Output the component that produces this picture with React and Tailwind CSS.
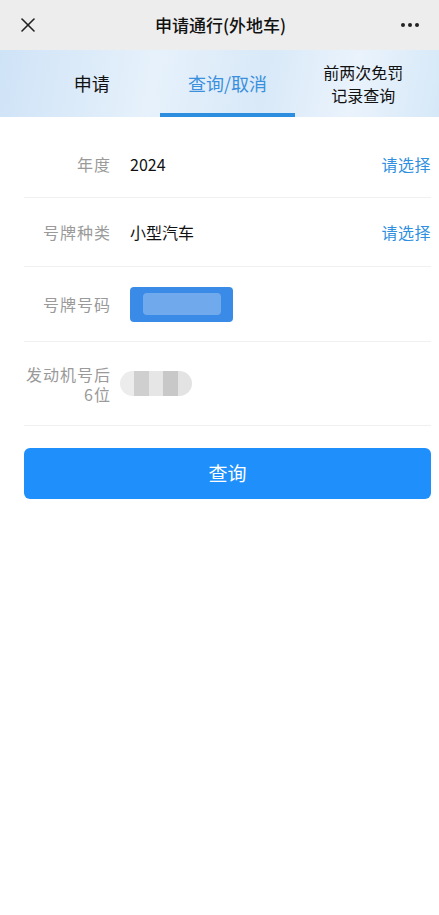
import { X } from 'lucide-react';

const cjk = { fontFamily: '"Noto Sans CJK SC", "Noto Sans", sans-serif' };

function Row({ label, children, right, className }) {
    return (
        <div className={`flex items-center border-b border-[#f0f0f0] ${className}`}>
            <div className="w-[87px] shrink-0 text-right text-[16px] leading-[20px] tracking-[1px] text-[#9a9a9a]">
                {label}
            </div>
            <div className="flex-1 pl-[19px] text-[16px] text-[#111]">{children}</div>
            {right && <div className="text-[16px] tracking-[0.5px] text-[#2f8fe0]">{right}</div>}
        </div>
    );
}

export default function App() {
    return (
        <div className="min-h-[915px] bg-white" style={cjk}>
            {/* top bar */}
            <div className="h-[50px] bg-[#ededed] flex items-center justify-between px-[16px]">
                <X size={24} strokeWidth={1.6} className="text-[#222]" />
                <div className="text-[17px] font-medium text-[#111]">申请通行(外地车)</div>
                <div className="flex gap-[3px] pr-[4px]">
                    <span className="w-[4px] h-[4px] rounded-full bg-[#222]" />
                    <span className="w-[4px] h-[4px] rounded-full bg-[#222]" />
                    <span className="w-[4px] h-[4px] rounded-full bg-[#222]" />
                </div>
            </div>

            {/* tabs */}
            <div className="h-[67px] pl-[24px] pr-[8px] grid grid-cols-3 bg-[linear-gradient(100deg,#cfe3f7_0%,#e6f1fb_35%,#d9e9f8_60%,#eaf3fc_80%,#d6e8f8_100%)]">
                <div className="flex items-center justify-center text-[18px] text-[#111]">申请</div>
                <div className="relative flex items-center justify-center text-[18px] text-[#3a90dc]">
                    查询/取消
                    <span className="absolute left-0 right-0 bottom-0 h-[4px] bg-[#2d8ee0]" />
                </div>
                <div className="flex flex-col items-center justify-center text-[16px] leading-[23px] text-[#111]">
                    <span>前两次免罚</span>
                    <span>记录查询</span>
                </div>
            </div>

            {/* form */}
            <div className="pl-[24px] pr-[8px] pt-[13px]">
                <Row label="年度" right="请选择" className="h-[68px]">2024</Row>
                <Row label="号牌种类" right="请选择" className="h-[69px]">小型汽车</Row>
                <Row label="号牌号码" className="h-[75px]">
                    <div className="w-[103px] h-[35px] rounded-[4px] bg-[#3a8be8] flex items-center justify-center">
                        <div className="w-[78px] h-[22px] rounded-[4px] bg-[#7fb0ee] opacity-80" />
                    </div>
                </Row>
                <Row
                    label={
                        <div className="flex flex-col items-end">
                            <span>发动机号后</span>
                            <span>6位</span>
                        </div>
                    }
                    className="h-[84px]"
                >
                    <div className="-ml-[10px] w-[72px] h-[25px] rounded-full flex overflow-hidden">
                        <span className="flex-1 bg-[#ececec]" />
                        <span className="flex-1 bg-[#cfcfcf]" />
                        <span className="flex-1 bg-[#e6e6e6]" />
                        <span className="flex-1 bg-[#c8c8c8]" />
                        <span className="flex-1 bg-[#e3e3e3]" />
                    </div>
                </Row>

                <button className="mt-[22px] w-full h-[51px] rounded-[6px] bg-[#1f8ffb] text-white text-[19px]">
                    查询
                </button>
            </div>
        </div>
    );
}
